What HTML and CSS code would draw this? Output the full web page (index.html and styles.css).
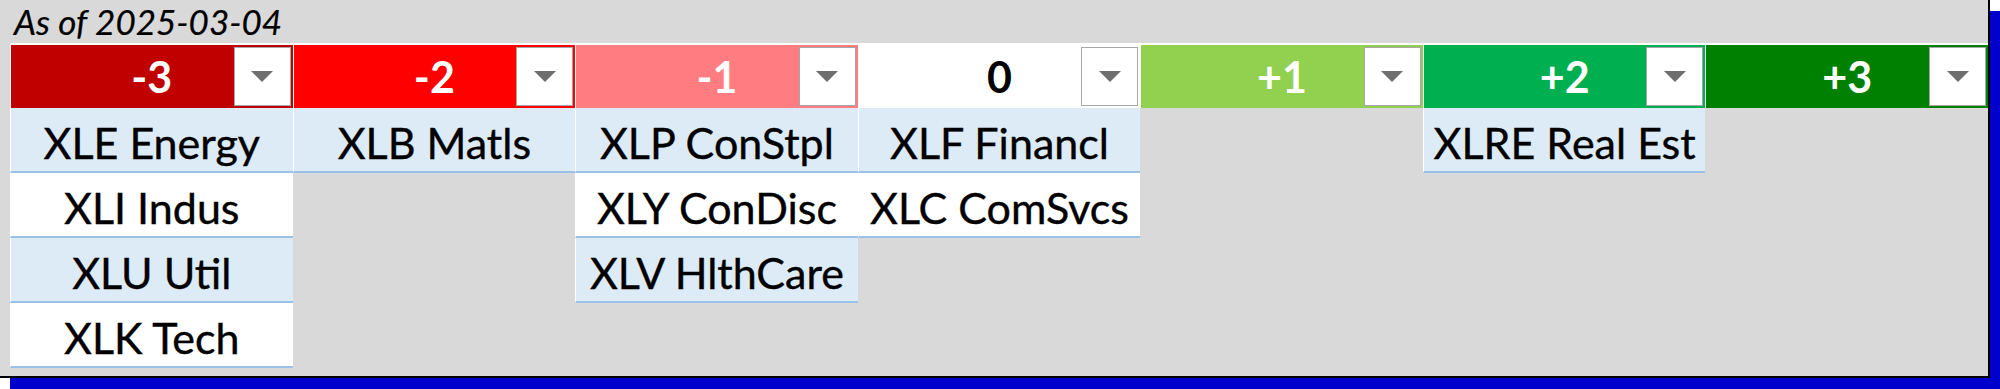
FILE: index.html
```html
<!DOCTYPE html>
<html>
<head>
<meta charset="utf-8">
<link rel="stylesheet" href="styles.css">
</head>
<body>
<div class="page">
<div class="frame">
  <div class="title">As of 2025-03-04</div>
  <div class="board">
    <div class="col">
      <div class="head h-m3"><span class="lbl">-3</span><span class="dd"><svg width="22" height="11" viewBox="0 0 22 11"><polygon points="0,0 22,0 11,11" fill="#6e6e6e"/></svg></span></div>
      <div class="cell band">XLE Energy</div>
      <div class="cell">XLI Indus</div>
      <div class="cell band">XLU Util</div>
      <div class="cell">XLK Tech</div>
    </div>
    <div class="col">
      <div class="head h-m2"><span class="lbl">-2</span><span class="dd"><svg width="22" height="11" viewBox="0 0 22 11"><polygon points="0,0 22,0 11,11" fill="#6e6e6e"/></svg></span></div>
      <div class="cell band">XLB Matls</div>
    </div>
    <div class="col">
      <div class="head h-m1"><span class="lbl">-1</span><span class="dd"><svg width="22" height="11" viewBox="0 0 22 11"><polygon points="0,0 22,0 11,11" fill="#6e6e6e"/></svg></span></div>
      <div class="cell band">XLP ConStpl</div>
      <div class="cell">XLY ConDisc</div>
      <div class="cell band">XLV HlthCare</div>
    </div>
    <div class="col">
      <div class="head h-0"><span class="lbl">0</span><span class="dd"><svg width="22" height="11" viewBox="0 0 22 11"><polygon points="0,0 22,0 11,11" fill="#6e6e6e"/></svg></span></div>
      <div class="cell band">XLF Financl</div>
      <div class="cell">XLC ComSvcs</div>
    </div>
    <div class="col">
      <div class="head h-p1"><span class="lbl">+1</span><span class="dd"><svg width="22" height="11" viewBox="0 0 22 11"><polygon points="0,0 22,0 11,11" fill="#6e6e6e"/></svg></span></div>
    </div>
    <div class="col">
      <div class="head h-p2"><span class="lbl">+2</span><span class="dd"><svg width="22" height="11" viewBox="0 0 22 11"><polygon points="0,0 22,0 11,11" fill="#6e6e6e"/></svg></span></div>
      <div class="cell band">XLRE Real Est</div>
    </div>
    <div class="col">
      <div class="head h-p3"><span class="lbl">+3</span><span class="dd"><svg width="22" height="11" viewBox="0 0 22 11"><polygon points="0,0 22,0 11,11" fill="#6e6e6e"/></svg></span></div>
    </div>
  </div>
</div>
</div>
</body>
</html>
```

FILE: styles.css
```css
html, body {
  margin: 0;
  padding: 0;
  background: #ffffff;
}

.page {
  width: 2000px;
  height: 389px;
  background:
    linear-gradient(#0000cc, #0000cc) 10px 378px / 1990px 11px no-repeat,
    linear-gradient(#0000cc, #0000cc) 1990px 11px / 10px 378px no-repeat,
    #ffffff;
}

.frame {
  width: 1988px;
  height: 376px;
  background: #d9d9d9;
  border-right: 2px solid #000;
  border-bottom: 2px solid #000;
  display: flex;
  flex-direction: column;
  font-family: Lato, "Liberation Sans", sans-serif;
}

.title {
  height: 43px;
  box-sizing: border-box;
  padding-left: 14px;
  font-style: italic;
  font-size: 35px;
  line-height: 43px;
  color: #000;
  -webkit-text-stroke: 0.2px #000;
}

.board {
  display: grid;
  grid-template-columns: repeat(7, 1fr);
  padding-left: 10px;
}

.col {
  display: flex;
  flex-direction: column;
}

.head {
  height: 65px;
  box-sizing: border-box;
  border-top: 2px solid #fff;
  border-left: 1px solid #fff;
  display: grid;
  grid-template-columns: 1fr auto 1fr;
  align-items: center;
  font-weight: bold;
  font-size: 43px;
  color: #fff;
}

.lbl {
  grid-column: 2;
  line-height: 1;
}

.dd {
  grid-column: 3;
  justify-self: end;
  width: 57px;
  height: 59px;
  box-sizing: border-box;
  margin-right: 2px;
  background: #fff;
  border: 1px solid #a6a6a6;
  display: flex;
  align-items: center;
  justify-content: center;
}

.dd svg {
  display: block;
}

.h-m3 { background: #c00000; }
.h-m2 { background: #ff0000; }
.h-m1 { background: #ff7c80; }
.h-0 { background: #ffffff; color: #000; }
.h-p1 { background: #92d050; }
.h-p2 { background: #00b050; }
.h-p3 { background: #008000; }

.cell {
  height: 65px;
  box-sizing: border-box;
  background: #ffffff;
  border-left: 1px solid #fff;
  border-bottom: 2px solid #9bc2e6;
  display: flex;
  align-items: center;
  justify-content: center;
  font-size: 43px;
  color: #000;
  padding-top: 6px;
  -webkit-text-stroke: 0.4px #000;
}

.cell.band {
  background: #ddebf7;
}
```
